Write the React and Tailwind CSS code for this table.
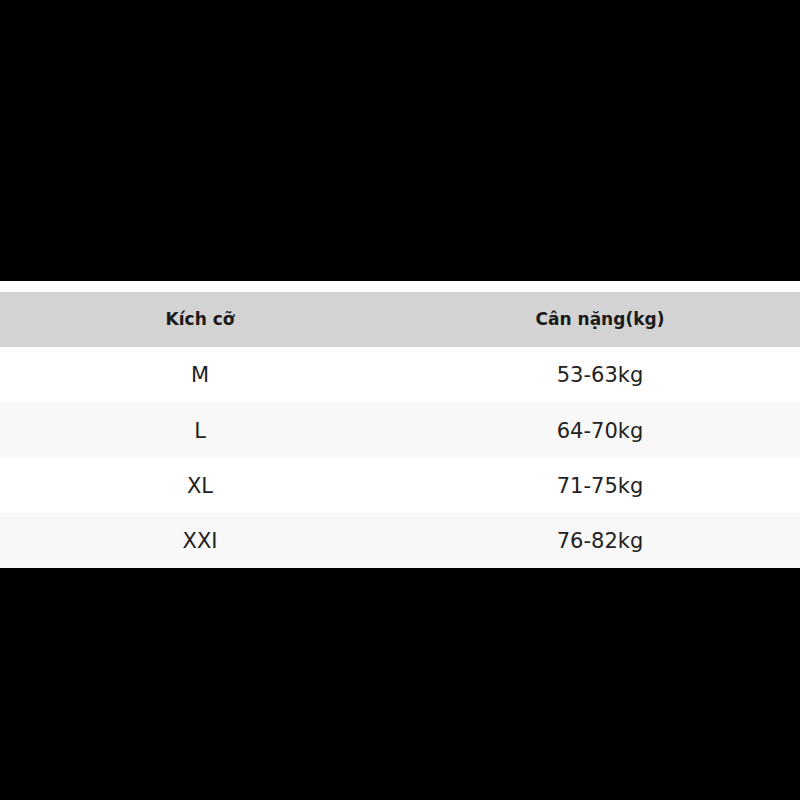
const rows = [
  { size: "M", weight: "53-63kg" },
  { size: "L", weight: "64-70kg" },
  { size: "XL", weight: "71-75kg" },
  { size: "XXI", weight: "76-82kg" },
];

export default function App() {
  return (
    <div
      className="min-h-[800px] bg-black pt-[281px]"
      style={{ fontFamily: '"DejaVu Sans", sans-serif' }}
    >
      <div className="bg-white pt-[11px]">
        <div className="grid h-[55px] grid-cols-2 items-center bg-[#d3d3d3] text-[17px] font-bold text-[#1a1a1a]">
          <div className="text-center">Kích cỡ</div>
          <div className="text-center">Cân nặng(kg)</div>
        </div>
        {rows.map((r, idx) => (
          <div
            key={r.size}
            className={`grid h-[55.25px] grid-cols-2 items-center pt-[3px] text-[21px] text-[#222] ${
              idx % 2 === 1 ? "bg-[#f8f8f8]" : "bg-white"
            }`}
          >
            <div className="text-center">{r.size}</div>
            <div className="text-center">{r.weight}</div>
          </div>
        ))}
      </div>
    </div>
  );
}
